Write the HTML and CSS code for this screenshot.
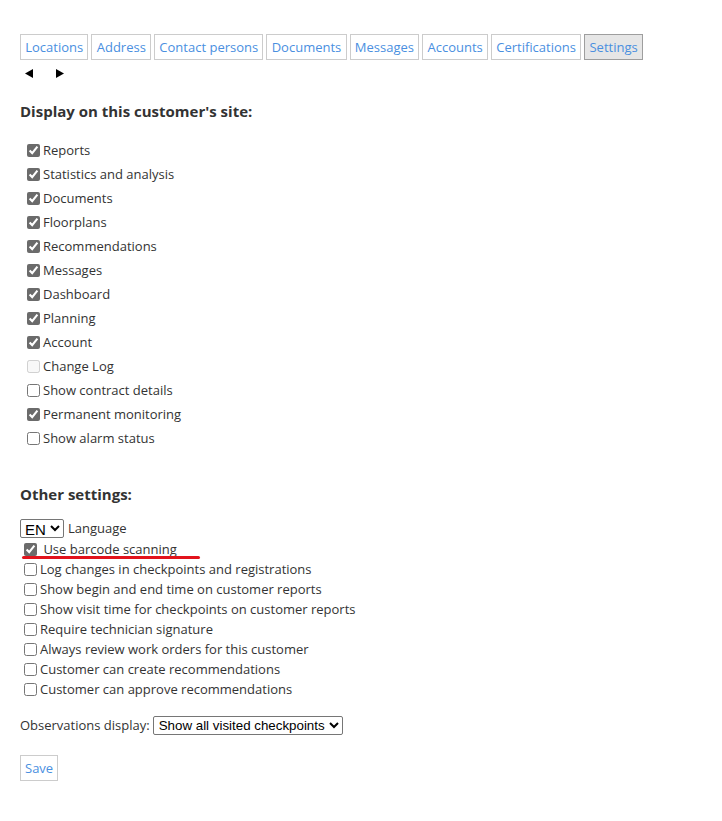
FILE: index.html
```html
<!DOCTYPE html>
<html>
<head>
<meta charset="utf-8">
<link rel="stylesheet" href="styles.css">
</head>
<body>
<div class="page">
  <nav class="tabs">
    <a class="tab">Locations</a>
    <a class="tab">Address</a>
    <a class="tab">Contact persons</a>
    <a class="tab">Documents</a>
    <a class="tab">Messages</a>
    <a class="tab">Accounts</a>
    <a class="tab">Certifications</a>
    <a class="tab active">Settings</a>
  </nav>
  <div class="arrows">
    <svg class="arrow" width="8" height="9" viewBox="0 0 8 9"><path d="M8 0 L8 9 L0 4.5 Z" fill="#000"/></svg>
    <svg class="arrow" width="8" height="9" viewBox="0 0 8 9"><path d="M0 0 L0 9 L8 4.5 Z" fill="#000"/></svg>
  </div>

  <h2 class="heading">Display on this customer's site:</h2>
  <div class="list list-site">
    <label class="row"><input type="checkbox" checked>Reports</label>
    <label class="row"><input type="checkbox" checked>Statistics and analysis</label>
    <label class="row"><input type="checkbox" checked>Documents</label>
    <label class="row"><input type="checkbox" checked>Floorplans</label>
    <label class="row"><input type="checkbox" checked>Recommendations</label>
    <label class="row"><input type="checkbox" checked>Messages</label>
    <label class="row"><input type="checkbox" checked>Dashboard</label>
    <label class="row"><input type="checkbox" checked>Planning</label>
    <label class="row"><input type="checkbox" checked>Account</label>
    <label class="row"><input type="checkbox" disabled>Change Log</label>
    <label class="row"><input type="checkbox">Show contract details</label>
    <label class="row"><input type="checkbox" checked>Permanent monitoring</label>
    <label class="row"><input type="checkbox">Show alarm status</label>
  </div>

  <h2 class="heading heading-other">Other settings:</h2>
  <div class="lang-row">
    <select class="select select-lang"><option>EN</option></select>
    <span>Language</span>
  </div>
  <div class="list list-other">
    <label class="row marked"><input type="checkbox" checked>&nbsp;Use barcode scanning</label>
    <label class="row"><input type="checkbox">Log changes in checkpoints and registrations</label>
    <label class="row"><input type="checkbox">Show begin and end time on customer reports</label>
    <label class="row"><input type="checkbox">Show visit time for checkpoints on customer reports</label>
    <label class="row"><input type="checkbox">Require technician signature</label>
    <label class="row"><input type="checkbox">Always review work orders for this customer</label>
    <label class="row"><input type="checkbox">Customer can create recommendations</label>
    <label class="row"><input type="checkbox">Customer can approve recommendations</label>
  </div>

  <div class="obs-row">
    <span>Observations display:</span>
    <select class="select select-obs"><option>Show all visited checkpoints</option></select>
  </div>

  <button class="save">Save</button>
</div>
</body>
</html>
```

FILE: styles.css
```css
html, body {
  margin: 0;
  padding: 0;
  background: #fff;
}

body {
  font-family: "Open Sans", "Liberation Sans", sans-serif;
  font-size: 13px;
  color: #333;
}

.page {
  padding: 34px 20px 40px 20px;
}

.tabs {
  display: flex;
  gap: 3px;
}

.tab {
  display: block;
  border: 1px solid #ccc;
  padding: 3px 4.25px;
  line-height: 18px;
  color: #4a8fdf;
  background: #fff;
  cursor: pointer;
}

.tab.active {
  background: #e6e6e6;
  border-color: #9e9e9e;
}

.arrows {
  display: flex;
  gap: 23px;
  padding-left: 5px;
  margin-top: 9px;
  height: 9px;
}

.arrow {
  display: block;
}

.heading {
  font-size: 15px;
  font-weight: 700;
  line-height: 20px;
  margin: 23px 0 0 0;
  color: #333;
}

.list-site {
  margin-top: 17px;
}

.row {
  display: flex;
  align-items: center;
  line-height: 18px;
}

.list-site .row {
  height: 24px;
}

.list-site input {
  margin: 0 3px 0 7px;
}

input[type="checkbox"] {
  width: 13px;
  height: 13px;
  accent-color: #6b6b6b;
}

.heading-other {
  margin-top: 34px;
}

.lang-row {
  display: flex;
  align-items: center;
  gap: 4px;
  height: 20px;
  margin-top: 14px;
}

.select {
  font-family: "Liberation Sans", Arial, sans-serif;
  color: #000;
  background: #fff;
  border: 1px solid #767676;
  border-radius: 2px;
  margin: 0;
}

.select-lang {
  font-size: 15px;
  height: 19px;
  width: 44px;
  padding: 0;
}

.select-obs {
  font-size: 13.33px;
  height: 19px;
  width: 190px;
  padding: 0 0 0 1px;
}

.list-other {
  margin-top: 1px;
}

.list-other .row {
  height: 20px;
}

.list-other input {
  margin: 0 3px 0 4px;
}

.marked {
  position: relative;
}

.marked::after {
  content: "";
  position: absolute;
  left: 2px;
  top: 17px;
  width: 178px;
  height: 3px;
  border-radius: 2px;
  background: #e2131c;
}

.obs-row {
  display: flex;
  align-items: center;
  gap: 3px;
  height: 20px;
  margin-top: 16px;
}

.save {
  display: block;
  margin-top: 20px;
  font-family: "Open Sans", "Liberation Sans", sans-serif;
  font-size: 13px;
  line-height: 18px;
  color: #4a8fdf;
  background: #fff;
  border: 1px solid #ccc;
  border-radius: 0;
  padding: 3px 4px;
  height: 26px;
}
```
